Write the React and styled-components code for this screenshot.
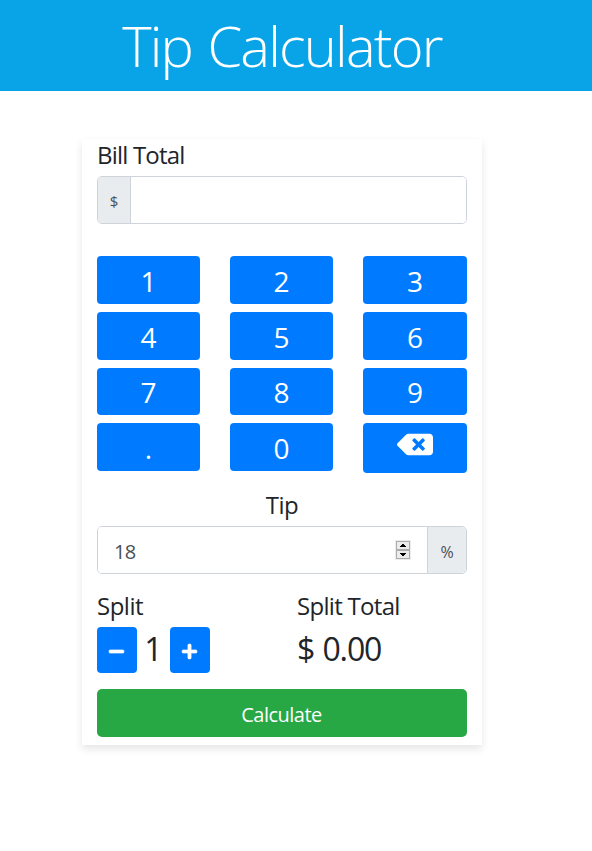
import React, { useState } from 'react';
import styled, { createGlobalStyle } from 'styled-components';
import { FaBackspace, FaMinus, FaPlus } from 'react-icons/fa';

const GlobalStyle = createGlobalStyle`
  *, *::before, *::after { box-sizing: border-box; }
  body {
    margin: 0;
    background: #fff;
    color: #212529;
    font-family: "Segoe UI", "Open Sans", "Noto Sans", sans-serif;
    font-size: 16px;
    line-height: 1.5;
  }
  button, input { font-family: inherit; }
`;

const Page = styled.div`
  min-height: 100vh;
`;

const Header = styled.header`
  height: 91px;
  background: #09a4e8;
  color: #fff;
  display: flex;
  justify-content: center;
  padding: 12px 28px 0 0;
`;

const Title = styled.h1`
  margin: 0;
  font-size: 56px;
  font-weight: 300;
  line-height: 67px;
  letter-spacing: -1.8px;
  word-spacing: 2.5px;
  white-space: nowrap;
`;

const Card = styled.main`
  width: 400px;
  height: 606px;
  margin: 48px 0 0 82px;
  padding: 0 15px;
  background: #fff;
  box-shadow: 0 4px 8px rgba(0, 0, 0, 0.1);
`;

const Label = styled.h2`
  margin: 0 0 8px;
  height: 29px;
  font-size: 24px;
  font-weight: 400;
  line-height: 32px;
  letter-spacing: ${({ $spacing = '-0.7px' }) => $spacing};
  text-align: ${({ $align = 'left' }) => $align};
  white-space: nowrap;
`;

const InputGroup = styled.div`
  display: flex;
  height: 48px;
  border: 1px solid #ced4da;
  border-radius: 5px;
  overflow: hidden;
`;

const Addon = styled.span`
  flex: 0 0 ${({ $width }) => $width};
  display: flex;
  align-items: center;
  justify-content: center;
  padding-top: 3px;
  background: #e9ecef;
  color: #495057;
  font-size: ${({ $size = '16px' }) => $size};
  border: 0 solid #ced4da;
  border-width: ${({ $side }) => ($side === 'left' ? '0 1px 0 0' : '0 0 0 1px')};
`;

const Field = styled.input`
  flex: 1;
  min-width: 0;
  border: 0;
  outline: 0;
  padding: 2px 16px 0;
  background: #fff;
  color: #495057;
  font-size: 20px;
  letter-spacing: -0.8px;
`;

const Stepper = styled.span`
  align-self: center;
  display: grid;
  grid-template-rows: 9px 9px;
  width: 14px;
  height: 18px;
  margin: 0 17px 0 0;
  outline: 1px solid #ececec;
`;

const StepButton = styled.button`
  display: flex;
  align-items: center;
  justify-content: center;
  padding: 0;
  border: 1px solid #acacac;
  background: #ececec;
`;

const Keypad = styled.section`
  display: grid;
  grid-template-columns: 103px 103px 104px;
  grid-template-rows: 48px 48px 47px 50px;
  column-gap: 30px;
  row-gap: 8px;
  margin: 32px 0 16px;
`;

const Key = styled.button`
  height: 100%;
  max-height: ${({ $tall }) => ($tall ? '50px' : '48px')};
  padding: ${({ $tall }) => ($tall ? '0 0 8px' : '1px 0 0')};
  display: flex;
  align-items: center;
  justify-content: center;
  border: 0;
  border-radius: 4px;
  background: #007bff;
  color: #fff;
  font-size: 28px;
  line-height: 1;
`;

const BackspaceIcon = styled(FaBackspace)`
  width: 36px;
  height: 29px;
`;

const SplitRow = styled.section`
  display: grid;
  grid-template-columns: 200px 1fr;
  margin-top: 16px;
`;

const Counter = styled.div`
  display: flex;
  height: 46px;
`;

const CountButton = styled.button`
  width: 40px;
  height: 46px;
  display: flex;
  align-items: center;
  justify-content: center;
  padding: 2px 1px 0 0;
  border: 0;
  border-radius: 4px;
  background: #007bff;
  color: #fff;
  font-size: 17px;

  path {
    stroke: currentColor;
    stroke-width: 18px;
  }
`;

const Count = styled.span`
  width: 33px;
  text-align: center;
  font-size: 32px;
  line-height: 44px;
`;

const Total = styled.div`
  font-size: 32px;
  line-height: 44px;
  letter-spacing: -1.1px;
  word-spacing: 1px;
  white-space: nowrap;
`;

const Calculate = styled.button`
  display: block;
  width: 100%;
  height: 48px;
  margin-top: 16px;
  padding: 2px 1px 0 0;
  border: 0;
  border-radius: 5px;
  background: #28a745;
  color: #fff;
  font-size: 20px;
  letter-spacing: -0.5px;
`;

const KEYS = ['1', '2', '3', '4', '5', '6', '7', '8', '9', '.', '0'];

export default function App() {
  const [bill, setBill] = useState('');
  const [tip, setTip] = useState(18);
  const [people, setPeople] = useState(1);
  const [total, setTotal] = useState('0.00');

  const calculate = () =>
    setTotal((((Number(bill) || 0) * (1 + tip / 100)) / people).toFixed(2));

  return (
    <Page>
      <GlobalStyle />
      <Header>
        <Title>Tip Calculator</Title>
      </Header>
      <Card>
        <Label $spacing="-0.8px">Bill Total</Label>
        <InputGroup>
          <Addon $side="left" $width="33px" $size="15px">$</Addon>
          <Field value={bill} onChange={(e) => setBill(e.target.value)} />
        </InputGroup>
        <Keypad>
          {KEYS.map((key) => (
            <Key key={key} onClick={() => setBill(bill + key)}>{key}</Key>
          ))}
          <Key $tall onClick={() => setBill(bill.slice(0, -1))}>
            <BackspaceIcon />
          </Key>
        </Keypad>
        <Label $align="center" $spacing="-0.5px">Tip</Label>
        <InputGroup>
          <Field value={tip} onChange={(e) => setTip(Number(e.target.value) || 0)} />
          <Stepper>
            <StepButton onClick={() => setTip(tip + 1)}>
              <svg width="6" height="3" viewBox="0 0 6 3" shapeRendering="crispEdges">
                <path d="M2 0h2v1h1v1h1v1H0V2h1V1h1z" />
              </svg>
            </StepButton>
            <StepButton onClick={() => setTip(Math.max(0, tip - 1))}>
              <svg width="6" height="3" viewBox="0 0 6 3" shapeRendering="crispEdges">
                <path d="M0 0h6v1H5v1H4v1H2V2H1V1H0z" />
              </svg>
            </StepButton>
          </Stepper>
          <Addon $side="right" $width="39px">%</Addon>
        </InputGroup>
        <SplitRow>
          <div>
            <Label $spacing="-0.5px">Split</Label>
            <Counter>
              <CountButton onClick={() => setPeople(Math.max(1, people - 1))}>
                <FaMinus />
              </CountButton>
              <Count>{people}</Count>
              <CountButton onClick={() => setPeople(people + 1)}>
                <FaPlus />
              </CountButton>
            </Counter>
          </div>
          <div>
            <Label>Split Total</Label>
            <Total>$ {total}</Total>
          </div>
        </SplitRow>
        <Calculate onClick={calculate}>Calculate</Calculate>
      </Card>
    </Page>
  );
}
